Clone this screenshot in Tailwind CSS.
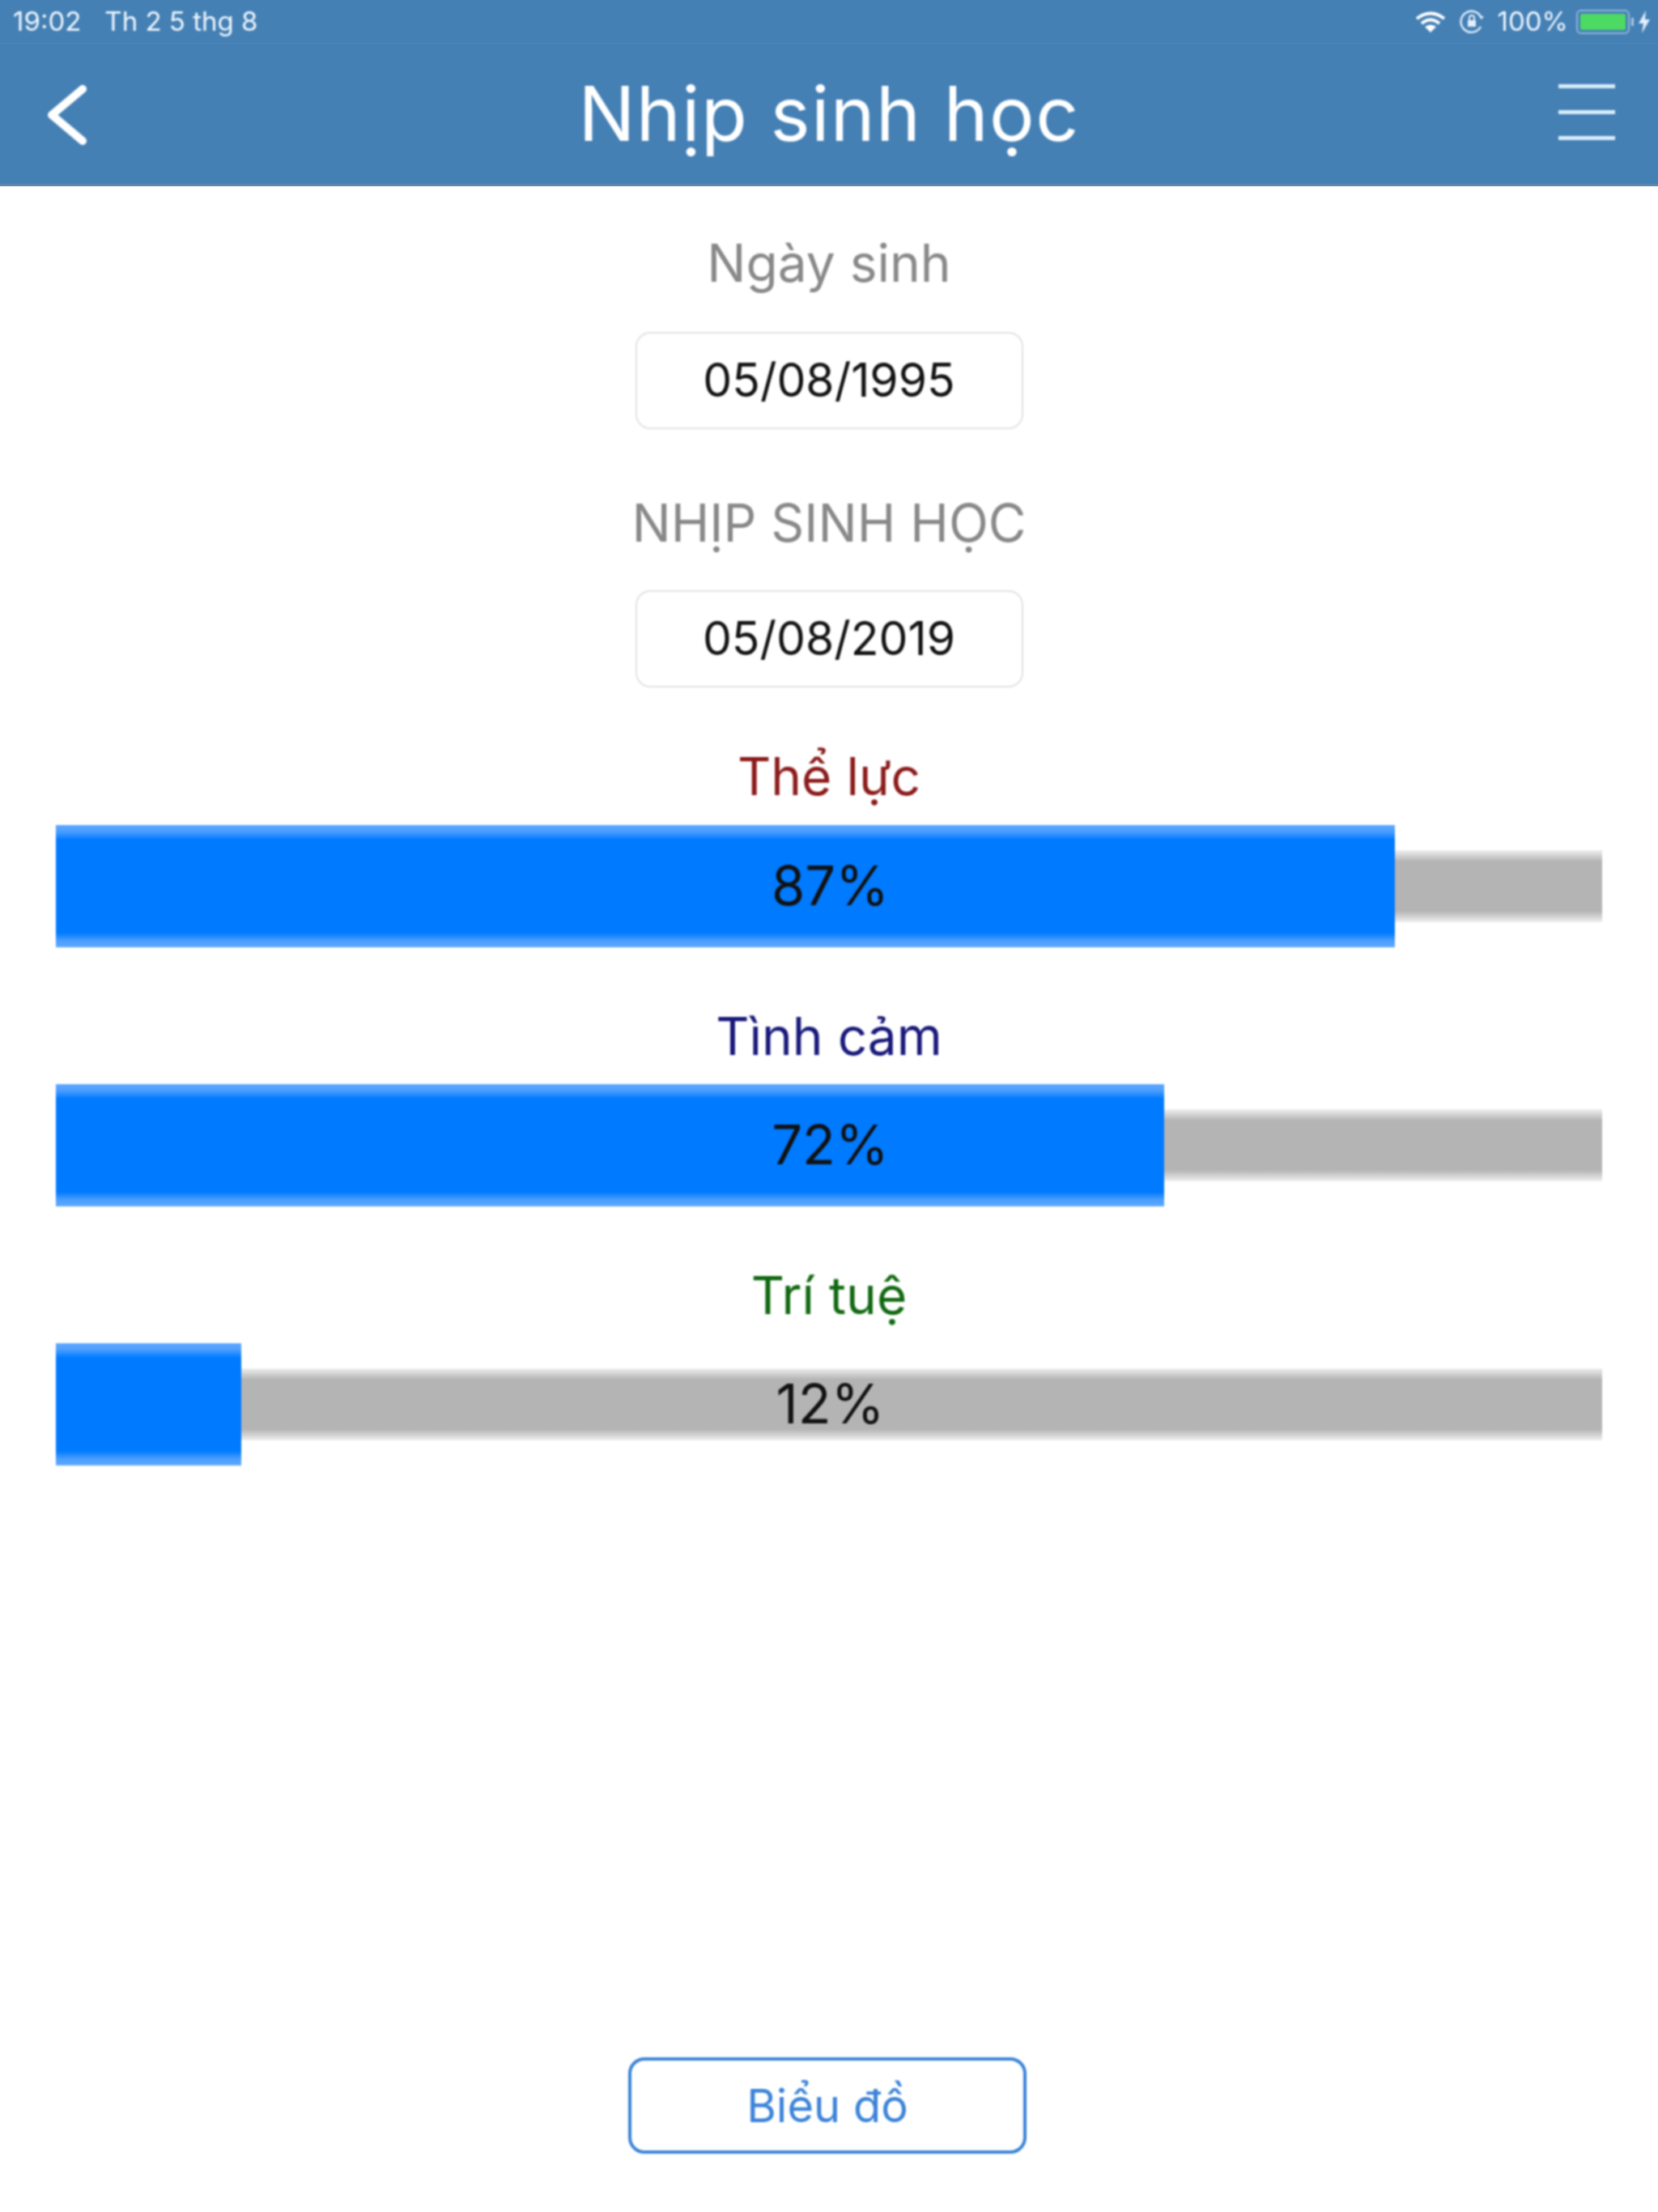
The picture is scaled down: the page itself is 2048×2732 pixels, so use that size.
<!DOCTYPE html>
<html lang="vi">
<head>
    <meta charset="UTF-8">
    <meta name="viewport" content="width=device-width, initial-scale=1.0">
    <title>Nhịp sinh học</title>
    <script src="https://cdn.jsdelivr.net/npm/@tailwindcss/browser@4"></script>
</head>
<body class="bg-white">
    <div class="w-[2048px] h-[2732px] flex flex-col font-['Inter','Liberation_Sans',sans-serif]">
        <!-- status bar + nav -->
        <header class="bg-[#4580b5] text-white border-b-[3px] border-[#5f86ab]">
            <div class="h-[54px] border-b border-[#4c87bb]">
                <div class="h-full flex items-center justify-between pl-[16px] pr-[10px] text-[#eef6fd] blur-[0.9px]">
                    <div class="flex gap-[29px] text-[33px]">
                        <span>19:02</span>
                        <span>Th 2 5 thg 8</span>
                    </div>
                    <div class="flex items-center text-[33px]">
                        <svg class="w-[38px] h-[28px] mr-[16px]" viewBox="0 0 38 28" fill="none" stroke="white" stroke-width="4">
                            <path d="M2 10 Q19 -3 36 10" />
                            <path d="M8 16 Q19 7 30 16" />
                            <path d="M19 27 L12 20 Q19 15 26 20 Z" fill="white" stroke="none" />
                        </svg>
                        <svg class="w-[32px] h-[30px] mr-[16px]" viewBox="0 0 32 30" fill="none" stroke="#e3effa" stroke-width="2.4">
                            <path d="M27 21 A13 13 0 1 1 28 11" />
                            <path d="M28 12 L31 8 L25 8 Z" fill="#e3effa" stroke="none" />
                            <rect x="11" y="13" width="10" height="8" fill="#e3effa" stroke="none" />
                            <path d="M13 13 V10 A3 3 0 0 1 19 10 V13" stroke-width="2" />
                        </svg>
                        <span>100%</span>
                        <div class="ml-[10px] w-[66px] h-[30px] rounded-[6px] border-2 border-[#8fb6d8] p-[3px]">
                            <div class="w-full h-full bg-[#4cd964] rounded-[2px]"></div>
                        </div>
                        <div class="w-[3px] h-[10px] bg-[#a9c9e4] ml-[2px] mr-[6px]"></div>
                        <svg class="w-[14px] h-[28px]" viewBox="0 0 14 28" fill="#e3effa">
                            <path d="M9 0 L0 16 H6 L4 28 L14 11 H8 Z" />
                        </svg>
                    </div>
                </div>
            </div>
            <div class="h-[173px] relative flex items-center justify-center blur-[0.9px]">
                <svg class="absolute left-[56px] top-[46px] w-[54px] h-[84px]" viewBox="0 0 54 84" fill="none" stroke="white" stroke-width="10" stroke-linecap="round" stroke-linejoin="round">
                    <path d="M46 10 L8 42 L46 74" />
                </svg>
                <h1 class="text-[93px] font-normal tracking-[1.3px]">Nhịp sinh học</h1>
                <div class="absolute right-[53px] top-[50px] w-[70px] flex flex-col gap-[27px]">
                    <div class="h-[5px] bg-[#d9ecfb]"></div>
                    <div class="h-[5px] bg-[#d9ecfb]"></div>
                    <div class="h-[5px] bg-[#d9ecfb]"></div>
                </div>
            </div>
        </header>

        <main class="flex-1 flex flex-col items-center blur-[0.9px]">
            <div class="h-[70px] mt-[60px] flex items-center text-[64px] text-[#888888]">Ngày sinh</div>
            <div class="mt-[50px] w-[479px] h-[120px] rounded-[18px] border-2 border-[#e2e2e2] flex items-center justify-center text-[57px] text-[#111111]">05/08/1995</div>

            <div class="h-[70px] mt-[81px] flex items-center text-[64px] text-[#888888]">NHỊP SINH HỌC</div>
            <div class="mt-[48px] w-[479px] h-[120px] rounded-[18px] border-2 border-[#e2e2e2] flex items-center justify-center text-[57px] text-[#111111]">05/08/2019</div>

            <div class="h-[70px] mt-[75px] flex items-center text-[64px] text-[#8b1a1a]">Thể lực</div>
            <div class="mt-[25px] relative w-[1910px] h-[151px] flex items-center">
                <div class="w-full h-[89px] bg-[linear-gradient(to_bottom,#efefef,#b4b4b5_14px,#b4b4b5_75px,#efefef)]"></div>
                <div class="absolute left-0 top-0 h-full bg-[linear-gradient(to_bottom,#5fa9ff,#4b9eff_8px,#007aff_18px,#007aff_133px,#4b9eff_143px,#5fa9ff)]" style="width: 86.6%"></div>
                <div class="absolute inset-0 pl-[3px] flex items-center justify-center text-[67px] text-[#111111]">87%</div>
            </div>

            <div class="h-[70px] mt-[75px] flex items-center text-[64px] text-[#18187a]">Tình cảm</div>
            <div class="mt-[24px] relative w-[1910px] h-[151px] flex items-center">
                <div class="w-full h-[89px] bg-[linear-gradient(to_bottom,#efefef,#b4b4b5_14px,#b4b4b5_75px,#efefef)]"></div>
                <div class="absolute left-0 top-0 h-full bg-[linear-gradient(to_bottom,#5fa9ff,#4b9eff_8px,#007aff_18px,#007aff_133px,#4b9eff_143px,#5fa9ff)]" style="width: 71.7%"></div>
                <div class="absolute inset-0 pl-[3px] flex items-center justify-center text-[67px] text-[#111111]">72%</div>
            </div>

            <div class="h-[70px] mt-[75px] flex items-center text-[64px] text-[#116811]">Trí tuệ</div>
            <div class="mt-[24px] relative w-[1910px] h-[151px] flex items-center">
                <div class="w-full h-[89px] bg-[linear-gradient(to_bottom,#efefef,#b4b4b5_14px,#b4b4b5_75px,#efefef)]"></div>
                <div class="absolute left-0 top-0 h-full bg-[linear-gradient(to_bottom,#5fa9ff,#4b9eff_8px,#007aff_18px,#007aff_133px,#4b9eff_143px,#5fa9ff)]" style="width: 12%"></div>
                <div class="absolute inset-0 pl-[3px] flex items-center justify-center text-[67px] text-[#111111]">12%</div>
            </div>

            <button class="mt-auto mb-[72px] mr-[4px] w-[492px] h-[119px] rounded-[20px] border-[4px] border-[#3a82d8] text-[56px] text-[#3a82d8]">Biểu đồ</button>
        </main>
    </div>
</body>
</html>
